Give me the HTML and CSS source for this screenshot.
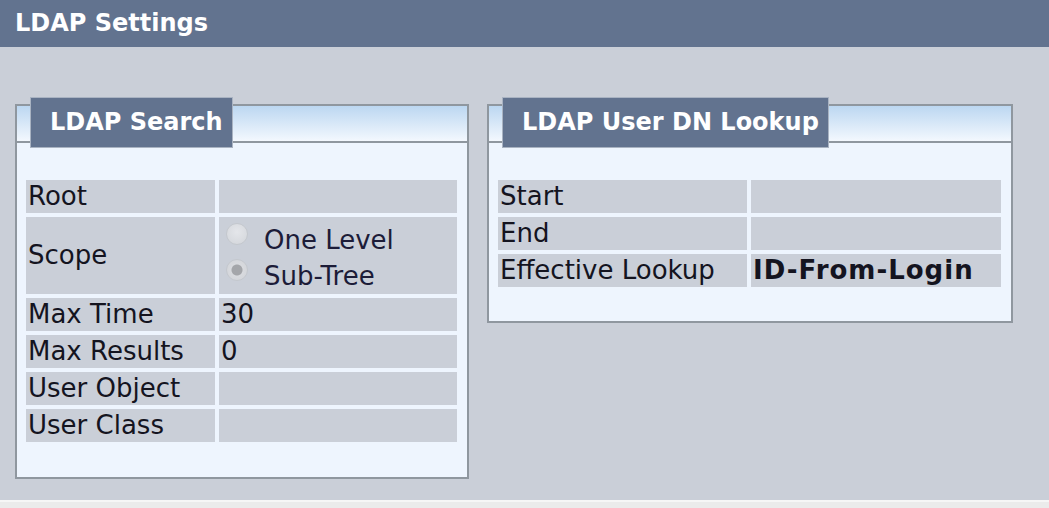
FILE: index.html
```html
<!DOCTYPE html>
<html lang="en">
<head>
    <meta charset="UTF-8">
    <meta name="viewport" content="width=device-width, initial-scale=1.0">
    <title>LDAP Settings</title>
    <link rel="stylesheet" href="styles.css">
</head>
<body>
    <div class="title-bar">LDAP Settings</div>
    <div class="content">
        <div class="panel panel-search">
            <div class="panel-head"><span class="tab">LDAP Search</span></div>
            <div class="panel-body">
                <table class="grid">
                    <tr><td class="label">Root</td><td class="value"></td></tr>
                    <tr>
                        <td class="label">Scope</td>
                        <td class="value scope">
                            <label class="radio"><span class="dot"></span>One Level</label>
                            <label class="radio"><span class="dot checked"></span>Sub-Tree</label>
                        </td>
                    </tr>
                    <tr><td class="label">Max Time</td><td class="value">30</td></tr>
                    <tr><td class="label">Max Results</td><td class="value">0</td></tr>
                    <tr><td class="label">User Object</td><td class="value"></td></tr>
                    <tr><td class="label">User Class</td><td class="value"></td></tr>
                </table>
            </div>
        </div>
        <div class="panel panel-lookup">
            <div class="panel-head"><span class="tab">LDAP User DN Lookup</span></div>
            <div class="panel-body">
                <table class="grid">
                    <tr><td class="label">Start</td><td class="value"></td></tr>
                    <tr><td class="label">End</td><td class="value"></td></tr>
                    <tr><td class="label">Effective Lookup</td><td class="value strong">ID-From-Login</td></tr>
                </table>
            </div>
        </div>
    </div>
    <div class="footer"></div>
</body>
</html>
```

FILE: styles.css
```css
html, body {
    margin: 0;
    padding: 0;
    height: 100vh;
    overflow: hidden;
}

body {
    font-family: "DejaVu Sans", Verdana, sans-serif;
    font-size: 26px;
    color: #14141f;
    background-color: #cacfd8;
}

.title-bar {
    height: 47px;
    box-sizing: border-box;
    padding: 9px 0 0 15px;
    background-color: #62738f;
    color: white;
    font-weight: bold;
    font-size: 24px;
}

.content {
    height: 453px;
    box-sizing: border-box;
    padding: 57px 0 0 15px;
    display: flex;
    align-items: flex-start;
    gap: 18px;
}

.panel {
    border: 2px solid #8f979f;
    background-color: #eef5fe;
}

.panel-search {
    width: 450px;
}

.panel-lookup {
    width: 522px;
}

.panel-head {
    height: 35px;
    border-bottom: 2px solid #8f979f;
    background: linear-gradient(#bcd7f1, #f3f8fe);
    display: flex;
    align-items: flex-start;
    padding-left: 13px;
}

.tab {
    margin-top: -9px;
    height: 51px;
    box-sizing: border-box;
    padding: 10px 9px 0 19px;
    background-color: #62738f;
    border: 1px solid #a9b3c2;
    color: white;
    font-weight: bold;
    font-size: 24px;
    white-space: nowrap;
}

.panel-body {
    padding: 33px 6px 31px 5px;
}

.panel-lookup .panel-body {
    padding-bottom: 30px;
}

.grid {
    border-collapse: separate;
    border-spacing: 4px;
    width: 100%;
}

.grid td {
    background-color: #cacfd8;
    height: 33px;
    padding: 0 2px;
    vertical-align: middle;
    line-height: 33px;
    white-space: nowrap;
}

.panel-search .label {
    width: 185px;
}

.panel-lookup .label {
    width: 245px;
}

.value {
    padding-left: 4px;
}

.strong {
    font-weight: bold;
    letter-spacing: 1px;
}

.grid td.scope {
    padding-top: 5px;
    padding-bottom: 0;
    height: 77px;
    box-sizing: border-box;
}

.radio {
    display: flex;
    align-items: center;
    height: 36px;
    line-height: 36px;
    color: #1c1c38;
}

.dot {
    width: 22px;
    height: 22px;
    border-radius: 50%;
    border: 1px solid #c4c8ce;
    background: radial-gradient(circle at 50% 40%, #e4e6ea, #d2d5da);
    margin: 0 16px 0 5px;
    box-sizing: border-box;
    position: relative;
    top: -6px;
}

.dot.checked {
    background: radial-gradient(circle, #a4a6aa 0, #a4a6aa 5px, #d8dade 6px, #d0d3d8 100%);
}

.footer {
    border-top: 2px solid #f6f6f6;
    background-color: #ebebeb;
    height: 20px;
}
```
